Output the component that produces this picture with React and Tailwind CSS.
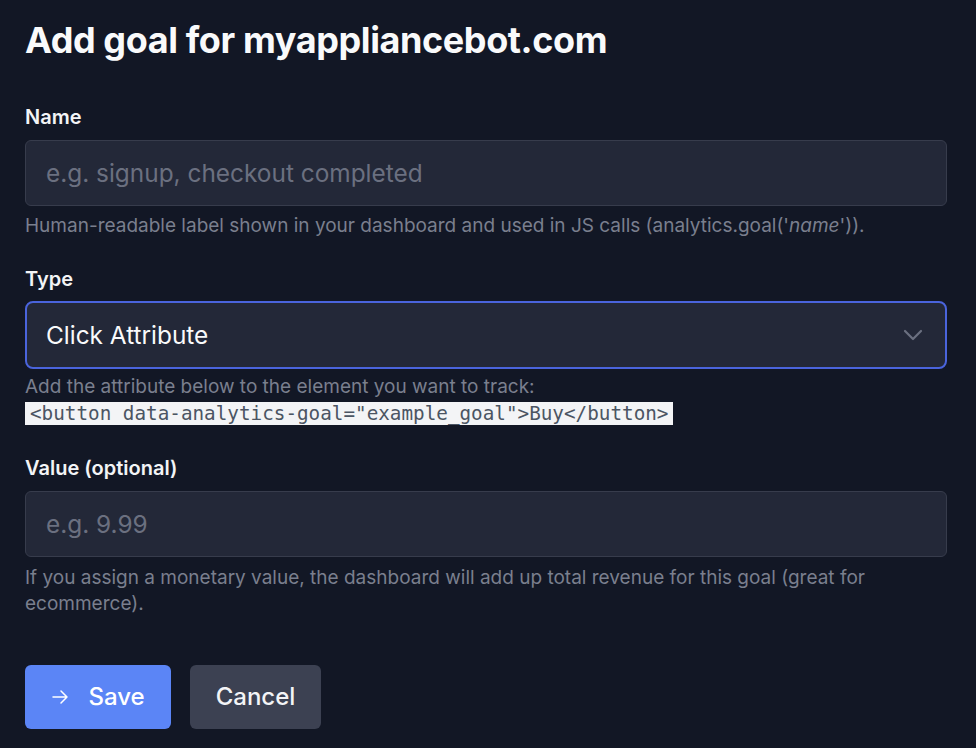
import React from "react";

const font = { fontFamily: "Inter, 'Noto Sans', sans-serif" };

const Field = ({ label, children, className = "" }) => (
  <div className={className}>
    <label className="block text-[20px] leading-[28px] font-semibold text-[#f3f4f6]">
      {label}
    </label>
    {children}
  </div>
);

export default function App() {
  return (
    <div
      className="min-h-screen bg-[#121725] pl-[25px] pr-[29px] pt-[18px] pb-[20px]"
      style={font}
    >
      <h1 className="text-[36px] leading-[44px] font-bold tracking-[-0.4px] text-[#f9fafb]">
        Add goal for myappliancebot.com
      </h1>

      {/* Name */}
      <Field label="Name" className="mt-[41px]">
        <input
          type="text"
          placeholder="e.g. signup, checkout completed"
          className="mt-[9px] block h-[66px] w-full rounded-[6px] border border-[#373c4c] bg-[#232838] px-[20px] text-[24.4px] text-white placeholder-[#6b7080] outline-none"
        />
        <p className="mt-[7px] text-[19px] leading-[26px] text-[#7a7f8e]">
          Human-readable label shown in your dashboard and used in JS calls
          (analytics.goal('<em>name</em>')).
        </p>
      </Field>

      {/* Type */}
      <Field label="Type" className="mt-[26px]">
        <div className="mt-[8px] flex h-[68px] w-full items-center justify-between rounded-[8px] border-2 border-[#4a64dc] bg-[#232838] pl-[19px] pr-[22px]">
          <span className="text-[24.4px] text-[#f9fafb]">Click Attribute</span>
          <svg
            width="20"
            height="12"
            viewBox="0 0 20 12"
            fill="none"
            stroke="#6b7080"
            strokeWidth="2.2"
            strokeLinecap="round"
            strokeLinejoin="round"
          >
            <path d="M2 2l8 8 8-8" />
          </svg>
        </div>
        <p className="mt-[5px] text-[19px] leading-[26px] text-[#7a7f8e]">
          Add the attribute below to the element you want to track:
        </p>
        <div className="mt-[2px] flex">
          <code
            className="block h-[23px] bg-[#f3f4f6] px-[5px] text-[19.3px] leading-[23px] text-[#4b5563]"
            style={{ fontFamily: "'DejaVu Sans Mono', monospace" }}
          >
            {'<button data-analytics-goal="example_goal">Buy</button>'}
          </code>
        </div>
      </Field>

      {/* Value */}
      <Field label="Value (optional)" className="mt-[29px]">
        <input
          type="text"
          placeholder="e.g. 9.99"
          className="mt-[9px] block h-[66px] w-full rounded-[6px] border border-[#373c4c] bg-[#232838] px-[20px] text-[24.4px] text-white placeholder-[#6b7080] outline-none"
        />
        <p className="mt-[8px] text-[19px] leading-[25.5px] text-[#7a7f8e]">
          If you assign a monetary value, the dashboard will add up total
          revenue for this goal (great for ecommerce).
        </p>
      </Field>

      {/* Actions */}
      <div className="mt-[49px] flex gap-[19px]">
        <button className="flex h-[64px] w-[146px] items-center justify-center gap-[19px] rounded-[6px] bg-[#5b85f6] text-[24px] font-medium text-white">
          <svg
            width="18"
            height="18"
            viewBox="0 0 18 18"
            fill="none"
            stroke="currentColor"
            strokeWidth="1.5"
            strokeLinecap="round"
            strokeLinejoin="round"
          >
            <path d="M2 9h14M10 3l6 6-6 6" />
          </svg>
          Save
        </button>
        <button className="flex h-[64px] w-[131px] items-center justify-center rounded-[6px] bg-[#3c4152] text-[24px] font-medium text-[#f3f4f6]">
          Cancel
        </button>
      </div>
    </div>
  );
}
